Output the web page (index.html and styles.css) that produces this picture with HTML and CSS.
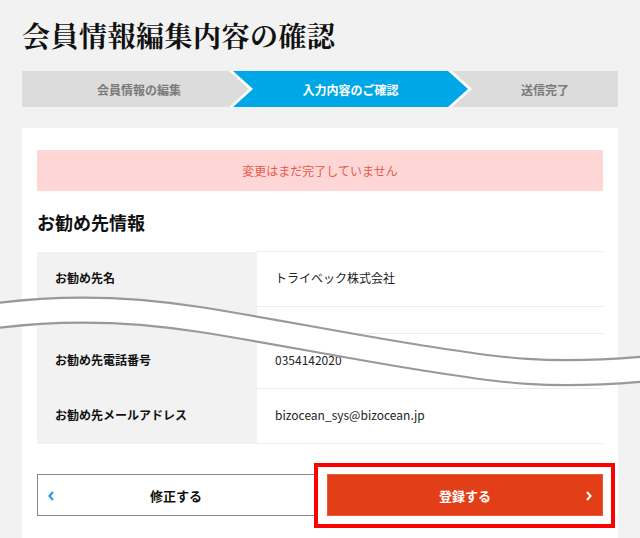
FILE: index.html
```html
<!DOCTYPE html>
<html lang="ja">
<head>
<meta charset="utf-8">
<title>会員情報編集内容の確認</title>
<link rel="stylesheet" href="styles.css">
</head>
<body>
<div class="page">
  <h1 class="title">会員情報編集内容の確認</h1>
  <ol class="steps">
    <li class="step step-first">会員情報の編集</li>
    <li class="step step-active"><span class="step-label">入力内容のご確認</span></li>
    <li class="step step-last">送信完了</li>
  </ol>
  <section class="card">
    <div class="alert">変更はまだ完了していません</div>
    <h2 class="section-title">お勧め先情報</h2>
    <table class="info">
      <tr><th>お勧め先名</th><td>トライベック株式会社</td></tr>
      <tr class="cut"><th></th><td></td></tr>
      <tr><th>お勧め先電話番号</th><td>0354142020</td></tr>
      <tr><th>お勧め先メールアドレス</th><td>bizocean_sys@bizocean.jp</td></tr>
    </table>
    <div class="actions">
      <a class="btn btn-back">
        <svg class="chev chev-left" width="6" height="10" viewBox="0 0 6 10"><polyline points="5,1 1.5,5 5,9" fill="none" stroke="#1a9be0" stroke-width="2"/></svg>
        修正する
      </a>
      <div class="btn-wrap">
        <a class="btn btn-submit">
          登録する
          <svg class="chev chev-right" width="6" height="10" viewBox="0 0 6 10"><polyline points="1,1 4.5,5 1,9" fill="none" stroke="#ffffff" stroke-width="2"/></svg>
        </a>
        <span class="highlight"></span>
      </div>
    </div>
  </section>
</div>
<svg class="wave" width="640" height="538" viewBox="0 0 640 538">
  <g fill="none">
    <path d="M-10,304 C60,294 130,296 200,307 S350,334 420,345 S540,366 650,356" stroke="#ffffff" stroke-width="26" transform="translate(0,12.5)"/>
    <path d="M-10,304 C60,294 130,296 200,307 S350,334 420,345 S540,366 650,356" stroke="#999999" stroke-width="2.2"/>
    <path d="M-10,304 C60,294 130,296 200,307 S350,334 420,345 S540,366 650,356" stroke="#999999" stroke-width="2.2" transform="translate(0,25)"/>
  </g>
</svg>
</body>
</html>
```
FILE: styles.css
```css
html, body {
  margin: 0;
  padding: 0;
  background: #f2f2f2;
  font-family: "Noto Sans CJK JP", "Noto Sans", sans-serif;
  color: #111;
  overflow: hidden;
}

.page {
  padding: 17px 22px 0;
}

.title {
  margin: 0;
  font-family: "Noto Serif CJK JP", "Noto Sans CJK JP", serif;
  font-size: 28px;
  line-height: 36px;
  font-weight: 700;
  color: #111;
  letter-spacing: 0.5px;
}

.steps {
  list-style: none;
  margin: 18px 0 0;
  padding: 0;
  display: flex;
  height: 36px;
  background: #dcdcdc;
}

.step {
  display: flex;
  align-items: center;
  justify-content: center;
  font-size: 12px;
  font-weight: 700;
  color: #7a7a7a;
}

.step-first {
  width: 207px;
  box-sizing: border-box;
  padding-left: 27px;
}

.step-active {
  width: 243px;
  position: relative;
  background: #ffffff;
  clip-path: polygon(0 0, calc(100% - 20px) 0, 100% 50%, calc(100% - 20px) 100%, 0 100%, 20px 50%);
  color: #ffffff;
}

.step-active::before {
  content: "";
  position: absolute;
  inset: 0;
  background: #00a7e6;
  clip-path: polygon(4px 0, calc(100% - 24px) 0, calc(100% - 4px) 50%, calc(100% - 24px) 100%, 4px 100%, 24px 50%);
}

.step-label {
  position: relative;
  z-index: 1;
}

.step-last {
  flex: 1;
}

.card {
  margin-top: 21px;
  background: #ffffff;
  padding: 22px 15px 40px;
}

.alert {
  height: 41px;
  line-height: 41px;
  background: #ffd6d6;
  color: #e5594a;
  font-size: 12px;
  text-align: center;
}

.section-title {
  margin: 18px 0 16px;
  font-size: 18px;
  line-height: 26px;
  font-weight: 700;
  color: #111;
}

.info {
  width: 100%;
  border-collapse: collapse;
  font-size: 12px;
}

.info tr {
  height: 55px;
}

.info tr.cut {
  height: 27px;
}

.info th {
  width: 220px;
  box-sizing: border-box;
  background: #f2f2f2;
  text-align: left;
  font-weight: 700;
  padding: 0 0 3px 18px;
  color: #111;
}

.info td {
  padding: 0 0 3px 18px;
  border-top: 1px solid #ececec;
  border-bottom: 1px solid #ececec;
  color: #222;
}

.actions {
  display: flex;
  gap: 12px;
  margin-top: 30px;
}

.btn {
  position: relative;
  display: flex;
  align-items: center;
  justify-content: center;
  height: 42px;
  box-sizing: border-box;
  font-size: 13px;
  font-weight: 700;
  text-decoration: none;
}

.btn-back {
  flex: 1;
  border: 1px solid #888;
  background: #fff;
  color: #111;
}

.btn-wrap {
  flex: 1;
  position: relative;
}

.btn-submit {
  background: #e23e17;
  border: 1px solid #e85a3a;
  color: #fff;
}

.chev {
  position: absolute;
  top: 16px;
}

.chev-left {
  left: 10px;
}

.chev-right {
  right: 10px;
}

.highlight {
  position: absolute;
  top: -11px;
  bottom: -12px;
  left: -13px;
  right: -12px;
  border: 4px solid #ff0000;
  pointer-events: none;
}

.wave {
  position: absolute;
  left: 0;
  top: 0;
  pointer-events: none;
}
```
